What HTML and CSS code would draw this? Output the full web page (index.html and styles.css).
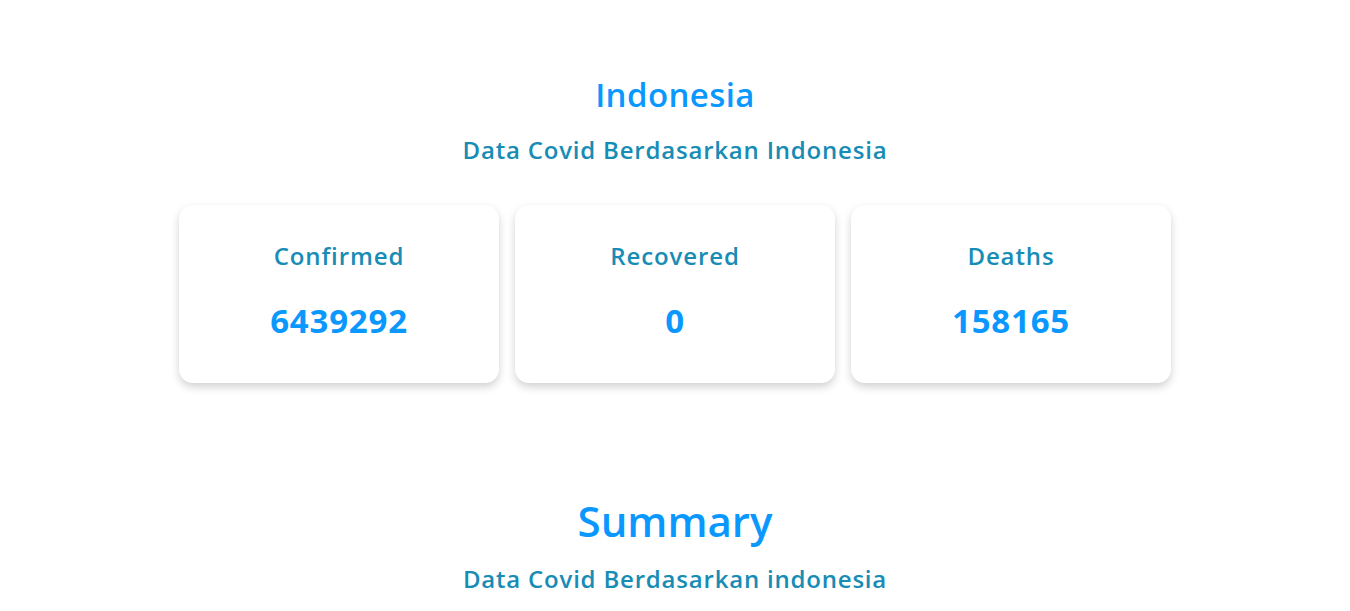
FILE: index.html
```html
<!DOCTYPE html>
<html>
<head>
<meta charset="utf-8">
<link rel="stylesheet" href="styles.css">
</head>
<body>
<main class="page">
  <section class="country">
    <h1 class="title">Indonesia</h1>
    <p class="subtitle">Data Covid Berdasarkan Indonesia</p>
    <div class="cards">
      <div class="card"><h3 class="card-label">Confirmed</h3><p class="card-value">6439292</p></div>
      <div class="card"><h3 class="card-label">Recovered</h3><p class="card-value">0</p></div>
      <div class="card"><h3 class="card-label">Deaths</h3><p class="card-value">158165</p></div>
    </div>
  </section>
  <section class="summary">
    <h2 class="summary-title">Summary</h2>
    <p class="subtitle">Data Covid Berdasarkan indonesia</p>
  </section>
</main>
</body>
</html>
```
FILE: styles.css
```css
* { box-sizing: border-box; }
html, body { margin: 0; padding: 0; background: #fff; }
body { font-family: "Open Sans", "Liberation Sans", sans-serif; overflow: hidden; }
.page { display: flex; flex-direction: column; align-items: center; }
.country { display: flex; flex-direction: column; align-items: center; padding-top: 74px; }
.title { margin: 0; font-size: 33px; font-weight: 600; color: #0a98ff; line-height: 42px; letter-spacing: 0.4px; }
.subtitle { margin: 0; font-size: 24px; font-weight: 600; color: #178cb5; line-height: 30px; letter-spacing: 0.8px; }
.country .subtitle { margin-top: 19px; }
.cards { display: flex; gap: 16px; margin-top: 40px; }
.card { width: 320px; height: 178px; background: #fff; border-radius: 14px; box-shadow: 0 4px 8px rgba(0,0,0,0.18); display: flex; flex-direction: column; align-items: center; padding-top: 36px; }
.card-label { margin: 0; font-size: 24px; font-weight: 600; color: #178cb5; line-height: 30px; letter-spacing: 0.9px; }
.card-value { margin: 32px 0 0; font-size: 33px; font-weight: 700; color: #0a98ff; line-height: 36px; letter-spacing: 0.8px; }
.summary { display: flex; flex-direction: column; align-items: center; margin-top: 113px; }
.summary-title { margin: 0; font-size: 42px; font-weight: 600; color: #0a98ff; line-height: 50px; }
.summary .subtitle { margin-top: 18px; }
```
